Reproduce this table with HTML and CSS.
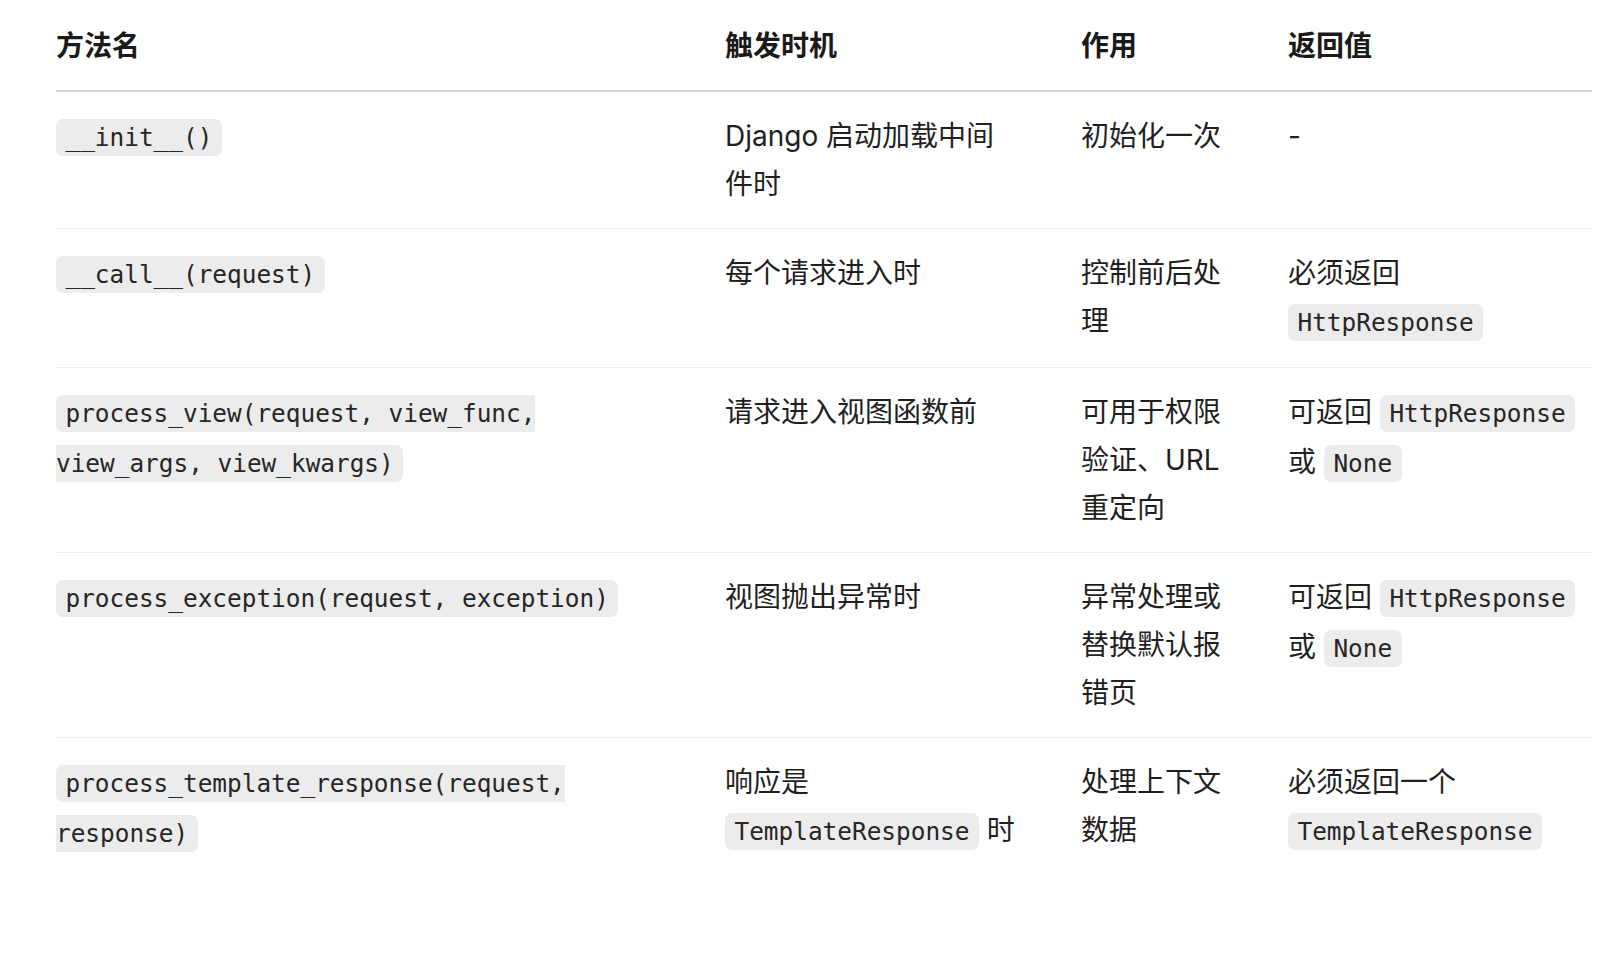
FILE: index.html
```html
<!DOCTYPE html>
<html lang="zh-CN">
<head>
<meta charset="utf-8">
<title>Django 中间件方法</title>
<link rel="stylesheet" href="styles.css">
</head>
<body>
<table class="mw-table">
  <colgroup>
    <col class="c1"><col class="c2"><col class="c3"><col class="c4">
  </colgroup>
  <thead>
    <tr><th>方法名</th><th>触发时机</th><th>作用</th><th>返回值</th></tr>
  </thead>
  <tbody>
    <tr>
      <td><code>__init__()</code></td>
      <td>Django 启动加载中间件时</td>
      <td>初始化一次</td>
      <td>-</td>
    </tr>
    <tr>
      <td><code>__call__(request)</code></td>
      <td>每个请求进入时</td>
      <td>控制前后处理</td>
      <td>必须返回 <code>HttpResponse</code></td>
    </tr>
    <tr>
      <td><code>process_view(request, view_func, view_args, view_kwargs)</code></td>
      <td>请求进入视图函数前</td>
      <td>可用于权限验证、URL 重定向</td>
      <td>可返回 <code>HttpResponse</code> 或 <code>None</code></td>
    </tr>
    <tr>
      <td><code>process_exception(request, exception)</code></td>
      <td>视图抛出异常时</td>
      <td>异常处理或替换默认报错页</td>
      <td>可返回 <code>HttpResponse</code> 或 <code>None</code></td>
    </tr>
    <tr>
      <td><code>process_template_response(request, response)</code></td>
      <td>响应是 <code>TemplateResponse</code> 时</td>
      <td>处理上下文数据</td>
      <td>必须返回一个 <code>TemplateResponse</code></td>
    </tr>
  </tbody>
</table>
</body>
</html>
```

FILE: styles.css
```css
html, body {
  margin: 0;
  padding: 0;
  background: #ffffff;
}

body {
  padding: 2px 14px 0 56px;
  font-family: "Inter", "Noto Sans CJK SC", sans-serif;
  font-size: 28px;
  line-height: 48px;
  color: #1f1f1f;
}

.mw-table {
  border-collapse: collapse;
  table-layout: fixed;
  width: 1536px;
}

.c1 { width: 669px; }
.c2 { width: 356px; }
.c3 { width: 207px; }
.c4 { width: 304px; }

.mw-table th,
.mw-table td {
  text-align: left;
  vertical-align: top;
  padding: 20px 66px 20px 0;
}

.mw-table th:last-child,
.mw-table td:last-child {
  padding-right: 0;
}

.mw-table th {
  font-weight: 700;
  color: #1a1a1a;
  border-bottom: 2px solid #d6d6d6;
}

.mw-table tbody tr {
  border-bottom: 1px solid #efefef;
}

.mw-table tbody tr:last-child {
  border-bottom: none;
}

code {
  font-family: "DejaVu Sans Mono", "Liberation Mono", monospace;
  font-size: 24.4px;
  color: #262626;
  background: #ececec;
  border-radius: 7px;
  padding: 4px 9.5px;
}
```
